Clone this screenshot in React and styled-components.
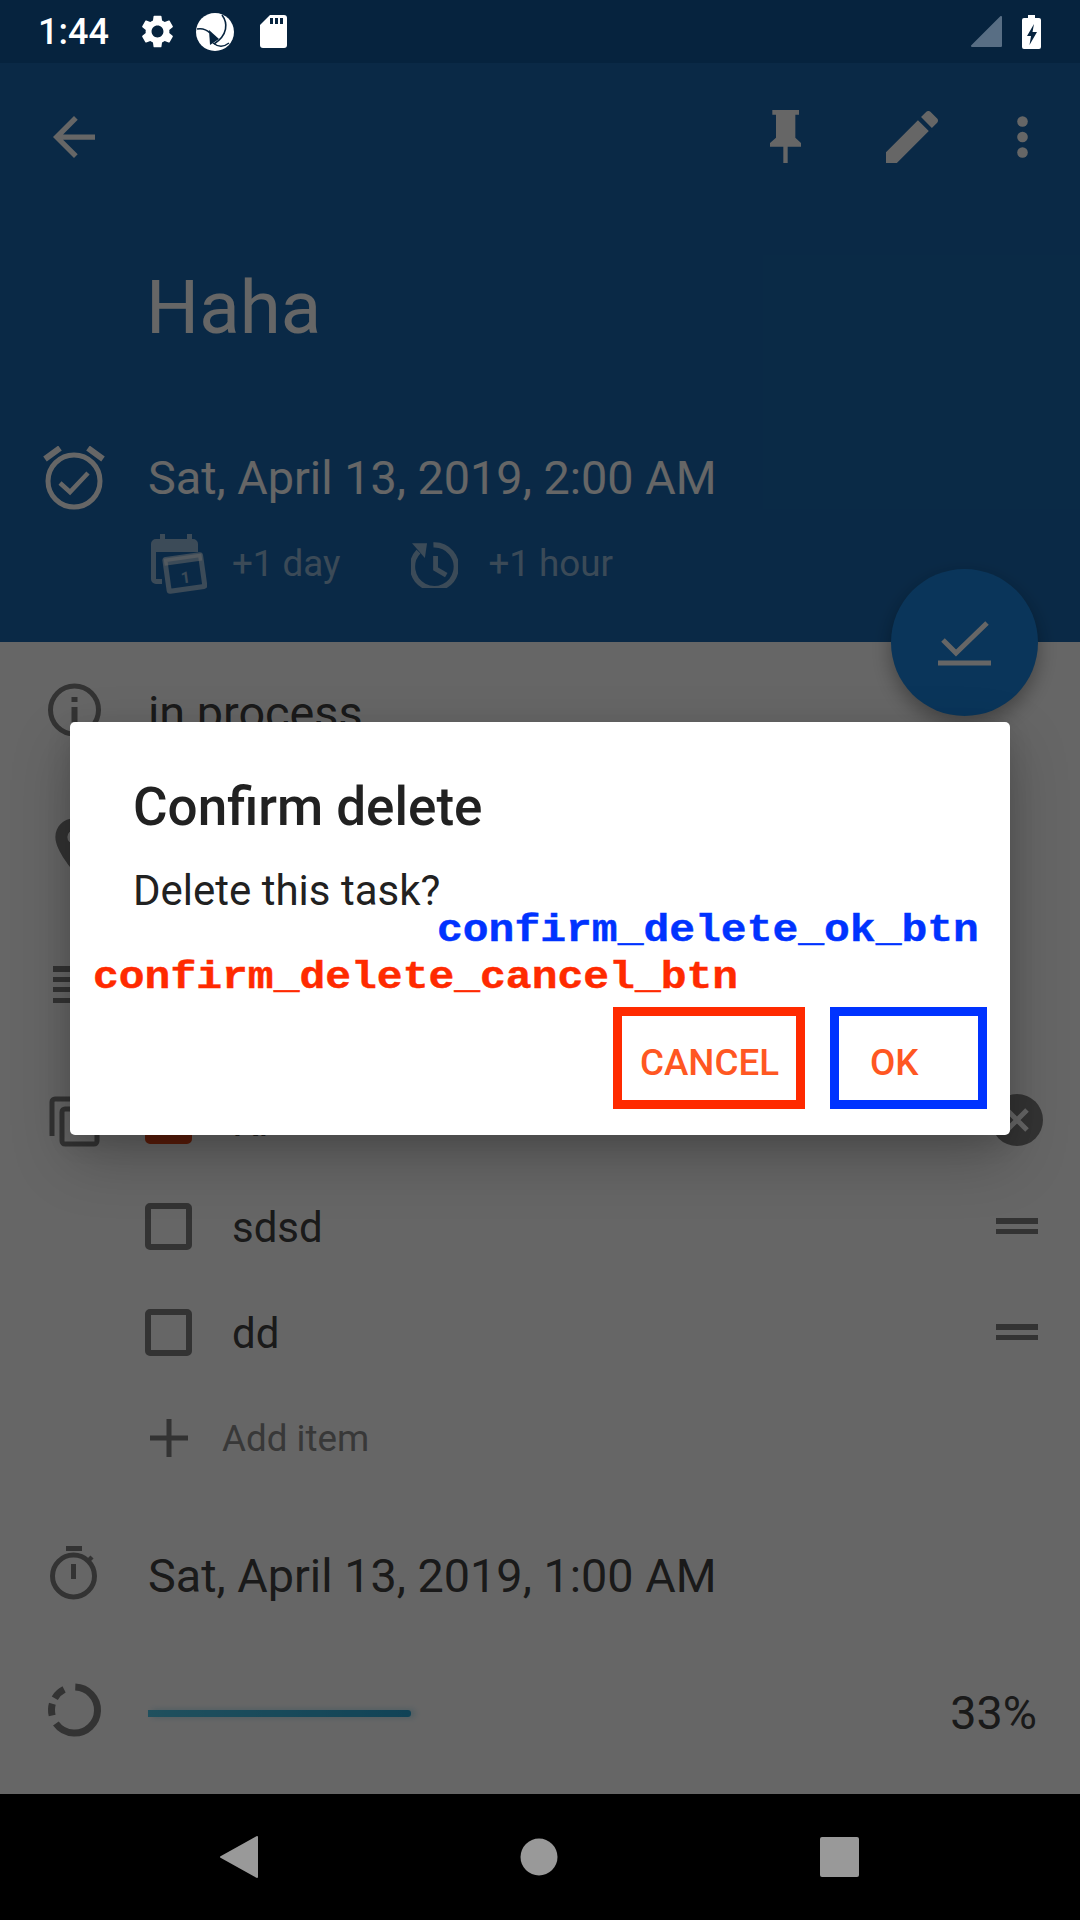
import React from 'react'
import styled, { createGlobalStyle } from 'styled-components'

const GlobalStyle = createGlobalStyle`
    html, body {
        margin: 0;
        padding: 0;
        background: #000;
    }
    * {
        box-sizing: border-box;
    }
`

const Screen = styled.div`
    width: 1080px;
    height: 1920px;
    display: flex;
    flex-direction: column;
    overflow: hidden;
    font-family: Roboto, "Liberation Sans", sans-serif;
`

const StatusBar = styled.div`
    height: 63px;
    flex: none;
    display: flex;
    align-items: center;
    padding: 0 39px 0 38px;
    background: #06233e;
    color: #fff;
`

const Clock = styled.span`
    font-size: 36px;
    font-weight: 500;
    line-height: 63px;
    margin-right: 33px;
    padding-top: 1px;
`

const StatusGroup = styled.div`
    display: flex;
    align-items: center;
    gap: ${(p) => p.$gap}px;
    margin-left: ${(p) => (p.$end ? 'auto' : '0')};
`

const Main = styled.div`
    position: relative;
    flex: 1;
    display: flex;
    flex-direction: column;
    background: #fff;
`

const Header = styled.header`
    position: relative;
    height: 579px;
    flex: none;
    background: #1a68b0;
    color: #fff;
`

const Toolbar = styled.div`
    height: 147px;
    display: flex;
    align-items: center;
    padding: 0 52px 0 53px;
`

const ToolActions = styled.div`
    display: flex;
    align-items: center;
    margin-left: auto;
`

const ToolIcon = styled.svg`
    display: block;
    margin-left: ${(p) => p.$gap || 0}px;
    fill: #fff;
`

const Title = styled.h1`
    margin: 58px 0 0 146px;
    font-size: 74.5px;
    line-height: 80px;
    font-weight: 400;
`

const DateRow = styled.div`
    display: flex;
    align-items: center;
    gap: 42px;
    height: 56px;
    margin-top: 102px;
    padding-left: 42px;
`

const IconSlot = styled.svg`
    display: block;
    flex: none;
    width: 64px;
    height: 64px;
    color: ${(p) => p.$color || '#808080'};
`

const BigText = styled.span`
    font-size: 46.75px;
    line-height: 56px;
    color: ${(p) => p.$color || '#424242'};
`

const QuickRow = styled.div`
    display: flex;
    align-items: center;
    height: 60px;
    margin-top: 28px;
    padding-left: 151px;
    color: rgba(255, 255, 255, 0.55);
`

const QuickAction = styled.div`
    display: flex;
    align-items: center;
    gap: ${(p) => p.$gap}px;
    margin-right: 71px;
    font-size: 36.75px;
    line-height: 46px;
`

const Fab = styled.div`
    position: absolute;
    right: 42px;
    bottom: -74px;
    width: 147px;
    height: 147px;
    display: flex;
    align-items: center;
    justify-content: center;
    border-radius: 50%;
    background: #1a86e0;
    box-shadow: 0 8px 20px rgba(0, 0, 0, 0.35);
`

const Body = styled.div`
    flex: 1;
    padding-top: 43px;
`

const DetailRow = styled.div`
    display: flex;
    align-items: center;
    gap: 42px;
    height: 56px;
    margin-top: ${(p) => p.$top || 0}px;
    padding-left: 42px;
`

const Checklist = styled.div`
    display: flex;
    margin-top: 54px;
    padding-left: 42px;
`

const ChecklistIcon = styled.div`
    flex: none;
    width: 103px;
    height: 106px;
    display: flex;
    align-items: center;
`

const ChecklistItems = styled.div`
    flex: 1;
`

const ChecklistRow = styled.div`
    height: 106px;
    display: flex;
    align-items: center;
    padding-right: 37px;
    font-size: 42px;
    color: #424242;
`

const ItemLabel = styled.span`
    margin: 3px 0 0 -1px;
`

const Checkbox = styled.div`
    flex: none;
    width: 47px;
    height: 47px;
    margin-right: 41px;
    border-radius: 5px;
    border: 6px solid ${(p) => (p.$checked ? '#e64a19' : '#808080')};
    background: ${(p) => (p.$checked ? '#e64a19' : 'transparent')};
`

const RowEnd = styled.div`
    width: 52px;
    margin-left: auto;
    display: flex;
    justify-content: center;
`

const AddRow = styled(ChecklistRow)`
    padding-left: 5px;
    font-size: 36.75px;
    color: #8c8c8c;
`

const ProgressRow = styled(DetailRow)`
    gap: 0;
    padding-right: 43px;
`

const Track = styled.div`
    flex: 1;
    height: 7px;
    margin: 0 4px 0 42px;
`

const Fill = styled.div`
    height: 100%;
    background: linear-gradient(90deg, #50c8ea, #2ba8d8);
    border-radius: 0 3px 3px 0;
    box-shadow: 4px 0 6px rgba(43, 168, 216, 0.35);
`

const Scrim = styled.div`
    position: absolute;
    inset: 0;
    display: flex;
    align-items: center;
    justify-content: center;
    background: rgba(0, 0, 0, 0.6);
`

const Dialog = styled.div`
    position: relative;
    width: 940px;
    height: 413px;
    padding: 53px 23px 26px 63px;
    display: flex;
    flex-direction: column;
    border-radius: 5px;
    background: #fff;
    box-shadow: 0 24px 60px rgba(0, 0, 0, 0.22), 0 8px 24px rgba(0, 0, 0, 0.12);
`

const DialogTitle = styled.div`
    font-size: 53px;
    line-height: 64px;
    font-weight: 500;
    color: #212121;
`

const DialogText = styled.div`
    margin-top: 24px;
    font-size: 42px;
    line-height: 56px;
    color: #212121;
`

const DialogButtons = styled.div`
    margin-top: auto;
    display: flex;
    justify-content: flex-end;
    gap: 25px;
`

const DialogButton = styled.div`
    width: ${(p) => p.$width}px;
    height: 102px;
    display: flex;
    align-items: center;
    padding: 9px 0 0 ${(p) => p.$pad}px;
    border: 9px solid ${(p) => p.$frame};
    font-size: 36.75px;
    font-weight: 500;
    color: #ff5722;
`

const IdLabel = styled.div`
    position: absolute;
    left: ${(p) => p.$left}px;
    top: ${(p) => p.$top}px;
    font-family: "Liberation Mono", monospace;
    font-weight: 700;
    font-size: 43px;
    line-height: 50px;
    white-space: nowrap;
    color: ${(p) => p.$color};
    transform: scaleY(0.9);
    -webkit-text-stroke: 0.5px ${(p) => p.$color};
`

const NavBar = styled.div`
    height: 126px;
    flex: none;
    display: flex;
    align-items: center;
    justify-content: center;
    padding-right: 2px;
    background: #000;
`

const NavSlot = styled.div`
    width: 300px;
    display: flex;
    justify-content: center;
`

const GEAR = 'M19.14 12.94c.04-.3.06-.61.06-.94 0-.32-.02-.64-.07-.94l2.03-1.58c.18-.14.23-.41.12-.61l-1.92-3.32c-.12-.22-.37-.29-.59-.22l-2.39.96c-.5-.38-1.03-.7-1.62-.94l-.36-2.54c-.04-.24-.24-.41-.48-.41h-3.84c-.24 0-.43.17-.47.41l-.36 2.54c-.59.24-1.13.57-1.62.94l-2.39-.96c-.22-.08-.47 0-.59.22L2.74 8.87c-.12.21-.08.47.12.61l2.03 1.58c-.05.3-.09.63-.09.94s.02.64.07.94l-2.03 1.58c-.18.14-.23.41-.12.61l1.92 3.32c.12.22.37.29.59.22l2.39-.96c.5.38 1.03.7 1.62.94l.36 2.54c.05.24.24.41.48.41h3.84c.24 0 .44-.17.47-.41l.36-2.54c.59-.24 1.13-.56 1.62-.94l2.39.96c.22.08.47 0 .59-.22l1.92-3.32c.12-.22.07-.47-.12-.61l-2.01-1.58zM12 15.6c-1.98 0-3.6-1.62-3.6-3.6s1.62-3.6 3.6-3.6 3.6 1.62 3.6 3.6-1.62 3.6-3.6 3.6z'

const StatusIcons = () => (
    <StatusGroup $gap={23}>
        <svg width="31" height="33" viewBox="2.6 2 18.8 20" fill="#fff" preserveAspectRatio="none">
            <path d={GEAR} />
        </svg>
        <svg width="38" height="38" viewBox="0 0 38 38">
            <circle cx="19" cy="19" r="19" fill="#fff" />
            <path d="M13 17 L23 26 L14 32 Z" fill="#06233e" />
            <path d="M26 2 C32 10 32 22 18 31" fill="none" stroke="#06233e" strokeWidth="1.6" />
            <path d="M1 16 C6 15 10 16 14 20" fill="none" stroke="#06233e" strokeWidth="1.6" />
            <path d="M17 30 C22 34 28 34 33 30" fill="none" stroke="#06233e" strokeWidth="1.4" />
        </svg>
        <svg width="30" height="33" viewBox="-3 0 30 33">
            <path d="M3 33a3 3 0 0 1-3-3V10L10 0h14a3 3 0 0 1 3 3v27a3 3 0 0 1-3 3z" fill="#fff" />
            <path d="M10 3h3v6h-3zM15 3h3v6h-3zM20 3h3v6h-3z" fill="#06233e" />
        </svg>
    </StatusGroup>
)

const StatusRight = () => (
    <StatusGroup $gap={20} $end>
        <svg width="31" height="31" viewBox="0 0 31 31">
            <path d="M1 30 L30 1 V30 Z" fill="#586e84" stroke="#586e84" strokeWidth="2" strokeLinejoin="round" />
        </svg>
        <svg width="19" height="34" viewBox="0 0 19 34">
            <path d="M6 0h7v3h4a2 2 0 0 1 2 2v27a2 2 0 0 1-2 2H2a2 2 0 0 1-2-2V5a2 2 0 0 1 2-2h4z" fill="#fff" />
            <path d="M12 9 L5 21 H9 L7.5 30 L15 17 H10.5 Z" fill="#06233e" />
        </svg>
    </StatusGroup>
)

const CalendarIcon = () => (
    <svg width="56" height="60" viewBox="0 0 56 60" style={{ display: 'block' }}>
        <path d="M9 0h5v5h22V0h5v5h1a5 5 0 0 1 5 5v8H5v27h6v5H5a5 5 0 0 1-5-5V10a5 5 0 0 1 5-5h4z" fill="currentColor" />
        <g transform="rotate(-8 34 40)">
            <rect x="16" y="23" width="36" height="32" rx="1" fill="none" stroke="currentColor" strokeWidth="5" />
            <rect x="15" y="22" width="38" height="7" fill="currentColor" />
            <text x="34" y="49" fontSize="16" fontWeight="700" fontFamily="Roboto" textAnchor="middle" fill="currentColor">1</text>
        </g>
    </svg>
)

const UndoClockIcon = () => (
    <svg width="47" height="47" viewBox="0 0 44 44" fill="none" stroke="currentColor" style={{ display: 'block' }}>
        <path d="M7 10 A20.5 20.5 0 1 0 21 3.6" strokeWidth="5" />
        <path d="M1 2 L15 2 L13 16 Z" fill="currentColor" stroke="none" />
        <path d="M23 14 V26 L33 32" strokeWidth="4.5" />
    </svg>
)

const AlarmIcon = () => (
    <IconSlot $color="#fff" viewBox="0 0 64 64" fill="none" stroke="currentColor">
        <circle cx="32" cy="35" r="26" strokeWidth="5" />
        <path d="M18 37 L28 46 L46 27" strokeWidth="4.5" />
        <path d="M3 13 L18 2 M46 2 L61 13" strokeWidth="6" />
    </IconSlot>
)

const InfoIcon = () => (
    <IconSlot viewBox="0 0 64 64" fill="none" stroke="currentColor">
        <circle cx="32.5" cy="29" r="24" strokeWidth="5" />
        <path d="M29.5 16h6v5h-6zM29.5 26h6v15h-6z" fill="currentColor" stroke="none" />
    </IconSlot>
)

const PlaceIcon = () => (
    <IconSlot viewBox="0 0 24 24" fill="currentColor">
        <path d="M12 2C8.13 2 5 5.13 5 9c0 5.25 7 13 7 13s7-7.75 7-13c0-3.87-3.13-7-7-7zm0 9.5a2.5 2.5 0 0 1 0-5 2.5 2.5 0 0 1 0 5z" />
    </IconSlot>
)

const NotesIcon = () => (
    <IconSlot viewBox="0 0 64 64" fill="currentColor">
        <path d="M11 13h42v6H11zM11 24h42v5H11zM11 34h42v5H11zM11 45h42v5H11z" />
    </IconSlot>
)

const CopyIcon = () => (
    <IconSlot viewBox="0 0 64 64" fill="none" stroke="currentColor" strokeWidth="5">
        <path d="M10 48 V14 a3 3 0 0 1 3-3 H46" />
        <rect x="20" y="21" width="35" height="35" rx="3" />
    </IconSlot>
)

const RemoveIcon = () => (
    <svg width="52" height="52" viewBox="0 0 52 52" style={{ display: 'block' }}>
        <circle cx="26" cy="26" r="26" fill="#808080" />
        <path d="M16 16 L36 36 M36 16 L16 36" stroke="#fff" strokeWidth="5" />
    </svg>
)

const HandleIcon = () => (
    <svg width="42" height="16" viewBox="0 0 42 16" fill="#808080" style={{ display: 'block' }}>
        <path d="M0 0h42v6H0zM0 11h42v5H0z" />
    </svg>
)

const PlusIcon = () => (
    <svg width="38" height="38" viewBox="0 0 38 38" stroke="#808080" strokeWidth="5" style={{ display: 'block', marginRight: 34 }}>
        <path d="M0 19h38M19 0v38" />
    </svg>
)

const StopwatchIcon = () => (
    <IconSlot viewBox="0 0 64 64" fill="none" stroke="currentColor">
        <circle cx="31.5" cy="32" r="21" strokeWidth="5" />
        <path d="M24 4.5h16" strokeWidth="5" />
        <path d="M31.5 20v15" strokeWidth="5" />
        <path d="M46 17l4-4" strokeWidth="4.5" />
    </IconSlot>
)

const RingIcon = () => (
    <IconSlot viewBox="0 0 64 64" fill="none" stroke="currentColor">
        <circle
            cx="32.5"
            cy="29"
            r="23"
            strokeWidth="7"
            pathLength="360"
            strokeDasharray="232 22 30 15 32 29"
            transform="rotate(-88 32.5 29)"
        />
    </IconSlot>
)

const CHECK_ITEMS = [
    { id: 1, label: 'Ki', checked: true },
    { id: 2, label: 'sdsd' },
    { id: 3, label: 'dd' },
]

export default function App() {
    return (
        <Screen>
            <GlobalStyle />
            <StatusBar>
                <Clock>1:44</Clock>
                <StatusIcons />
                <StatusRight />
            </StatusBar>
            <Main>
                <Header>
                    <Toolbar>
                        <ToolIcon width="42" height="42" viewBox="4 4 16 16">
                            <path d="M20 11H7.83l5.59-5.59L12 4l-8 8 8 8 1.41-1.41L7.83 13H20v-2z" />
                        </ToolIcon>
                        <ToolActions>
                            <ToolIcon width="31" height="53" viewBox="0 0 93 157" preserveAspectRatio="none">
                                <path d="M7 0H87V14H76V82L93 98V109H0V98L18 82V14H7ZM40 109H53V157H40Z" />
                            </ToolIcon>
                            <ToolIcon $gap={85} width="52" height="52" viewBox="3 3 18 18">
                                <path d="M3 17.25V21h3.75L17.81 9.94l-3.75-3.75L3 17.25zM20.71 7.04c.39-.39.39-1.02 0-1.41l-2.34-2.34c-.39-.39-1.02-.39-1.41 0l-1.83 1.83 3.75 3.75 1.83-1.83z" />
                            </ToolIcon>
                            <ToolIcon $gap={79} width="11" height="42" viewBox="0 0 11 42">
                                <circle cx="5.5" cy="5.5" r="5.3" />
                                <circle cx="5.5" cy="21" r="5.3" />
                                <circle cx="5.5" cy="36.5" r="5.3" />
                            </ToolIcon>
                        </ToolActions>
                    </Toolbar>
                    <Title>Haha</Title>
                    <DateRow>
                        <AlarmIcon />
                        <BigText $color="#fff">Sat, April 13, 2019, 2:00 AM</BigText>
                    </DateRow>
                    <QuickRow>
                        <QuickAction $gap={25}>
                            <CalendarIcon />
                            +1 day
                        </QuickAction>
                        <QuickAction $gap={30}>
                            <UndoClockIcon />
                            +1 hour
                        </QuickAction>
                    </QuickRow>
                    <Fab>
                        <svg width="54" height="46" viewBox="0 0 54 46" fill="none" stroke="#fff">
                            <path d="M5 20 L18 33 L49 3" strokeWidth="5" />
                            <path d="M0 43 H53" strokeWidth="5" />
                        </svg>
                    </Fab>
                </Header>
                <Body>
                    <DetailRow>
                        <InfoIcon />
                        <BigText>in process</BigText>
                    </DetailRow>
                    <DetailRow $top={76}>
                        <PlaceIcon />
                    </DetailRow>
                    <DetailRow $top={84}>
                        <NotesIcon />
                    </DetailRow>
                    <Checklist>
                        <ChecklistIcon>
                            <CopyIcon />
                        </ChecklistIcon>
                        <ChecklistItems>
                            {CHECK_ITEMS.map((item) => (
                                <ChecklistRow key={item.id}>
                                    <Checkbox $checked={item.checked} />
                                    <ItemLabel>{item.label}</ItemLabel>
                                    <RowEnd>{item.checked ? <RemoveIcon /> : <HandleIcon />}</RowEnd>
                                </ChecklistRow>
                            ))}
                            <AddRow>
                                <PlusIcon />
                                Add item
                            </AddRow>
                        </ChecklistItems>
                    </Checklist>
                    <DetailRow $top={57}>
                        <StopwatchIcon />
                        <BigText>Sat, April 13, 2019, 1:00 AM</BigText>
                    </DetailRow>
                    <ProgressRow $top={81}>
                        <RingIcon />
                        <Track>
                            <Fill style={{ width: '33%' }} />
                        </Track>
                        <BigText>33%</BigText>
                    </ProgressRow>
                </Body>
                <Scrim>
                    <Dialog>
                        <DialogTitle>Confirm delete</DialogTitle>
                        <DialogText>Delete this task?</DialogText>
                        <DialogButtons>
                            <DialogButton $frame="#ff2a00" $width={192} $pad={18}>CANCEL</DialogButton>
                            <DialogButton $frame="#0033ff" $width={157} $pad={31}>OK</DialogButton>
                        </DialogButtons>
                        <IdLabel $color="#0033ff" $left={367} $top={184}>confirm_delete_ok_btn</IdLabel>
                        <IdLabel $color="#ff2a00" $left={23} $top={231}>confirm_delete_cancel_btn</IdLabel>
                    </Dialog>
                </Scrim>
            </Main>
            <NavBar>
                <NavSlot>
                    <svg width="38" height="42" viewBox="0 0 38 42" fill="#999" stroke="#999" strokeWidth="2" strokeLinejoin="round">
                        <path d="M37 1 V41 L1 21 Z" />
                    </svg>
                </NavSlot>
                <NavSlot>
                    <svg width="38" height="38" viewBox="0 0 38 38" fill="#999">
                        <circle cx="19" cy="19" r="18.5" />
                    </svg>
                </NavSlot>
                <NavSlot>
                    <svg width="39" height="40" viewBox="0 0 39 40" fill="#999">
                        <rect width="39" height="40" rx="2" />
                    </svg>
                </NavSlot>
            </NavBar>
        </Screen>
    )
}
